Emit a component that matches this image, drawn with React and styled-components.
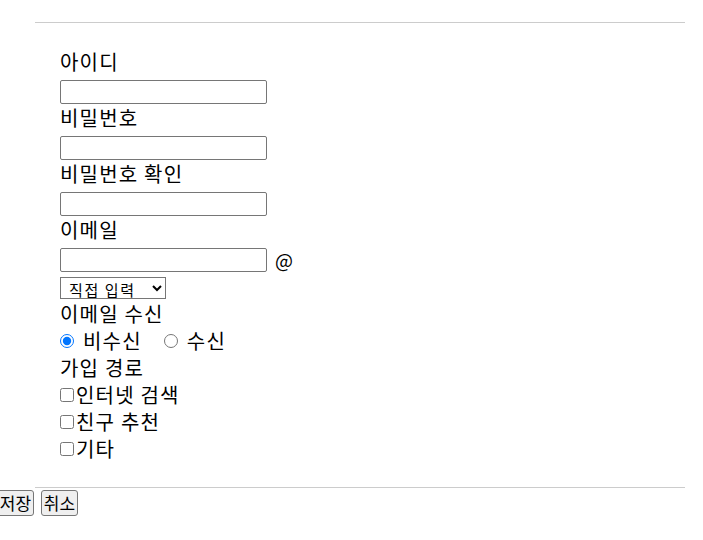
import React from 'react';
import styled, { createGlobalStyle } from "styled-components";

const GlobalStyle = createGlobalStyle`
  body {
    margin: 0;
    background: #fff;
    color: #000;
    font-family: "Noto Sans CJK KR", "Noto Sans", sans-serif;
  }
`;

const Form = styled.form`
  width: 600px;
  margin: 22px 0 0 35px;
  padding: 25px 25px;
  border-top: 1px solid #cccccc;
  border-bottom: 1px solid #cccccc;
  font-size: 20px;
  line-height: 27px;
  letter-spacing: 1.2px;
`;

const Label = styled.div`
  height: 27px;
`;

const InputRow = styled.div`
  display: flex;
  align-items: flex-end;
  height: 29px;
`;

const TextInput = styled.input`
  box-sizing: border-box;
  width: 207px;
  height: 24px;
  margin: 0;
  border: 1px solid #767676;
  border-radius: 2px;
  background: #fff;
`;

const At = styled.span`
  margin-left: 8px;
  line-height: 24px;
  font-size: 19px;
`;

const SelectRow = styled.div`
  display: flex;
  align-items: flex-start;
  height: 28px;
  padding-top: 5px;
  box-sizing: border-box;
`;

const Select = styled.select`
  box-sizing: border-box;
  width: 106px;
  height: 22px;
  margin: 0;
  padding: 0 0 0 4px;
  font-family: "Noto Sans CJK KR", sans-serif;
  font-size: 15px;
  line-height: 18px;
  letter-spacing: 1.6px;
  color: #000;
  border: 1px solid #767676;
  border-radius: 0;
  background: #fff;
`;

const OptionRow = styled.div`
  display: flex;
  align-items: center;
  height: 27px;
`;

const Radio = styled.input`
  width: 14px;
  height: 14px;
  margin: 0 0 0 ${p => p.$first ? 0 : 22}px;
`;

const RadioText = styled.span`
  margin-left: 9px;
`;

const Check = styled.input`
  width: 14px;
  height: 14px;
  margin: 0 2px 0 0;
`;

const Buttons = styled.div`
  display: flex;
  gap: 7px;
  margin: 2px 0 0 -3px;
`;

const Button = styled.button`
  box-sizing: border-box;
  width: 37px;
  height: 26px;
  padding: 0;
  font-family: "Noto Sans CJK KR", sans-serif;
  font-size: 17px;
  line-height: 24px;
  color: #000;
  background: #efefef;
  border: 1px solid #767676;
  border-radius: 3px;
`;

function Field({ label, type = "text", children }) {
  return (
    <>
      <Label>{label}</Label>
      <InputRow>
        <TextInput type={type} />
        {children}
      </InputRow>
    </>
  );
}

export default function App() {
  const routes = ["인터넷 검색", "친구 추천", "기타"];
  return (
    <>
      <GlobalStyle />
      <Form onSubmit={e => e.preventDefault()}>
        <Field label="아이디" />
        <Field label="비밀번호" type="password" />
        <Field label="비밀번호 확인" type="password" />
        <Field label="이메일">
          <At>@</At>
        </Field>
        <SelectRow>
          <Select defaultValue="direct">
            <option value="direct">직접 입력</option>
            <option value="naver">naver.com</option>
            <option value="gmail">gmail.com</option>
          </Select>
        </SelectRow>
        <Label>이메일 수신</Label>
        <OptionRow>
          <Radio type="radio" name="mail" $first defaultChecked />
          <RadioText>비수신</RadioText>
          <Radio type="radio" name="mail" />
          <RadioText>수신</RadioText>
        </OptionRow>
        <Label>가입 경로</Label>
        {routes.map(r => (
          <OptionRow key={r}>
            <Check type="checkbox" />
            <span>{r}</span>
          </OptionRow>
        ))}
      </Form>
      <Buttons>
        <Button type="button">저장</Button>
        <Button type="button">취소</Button>
      </Buttons>
    </>
  );
}
